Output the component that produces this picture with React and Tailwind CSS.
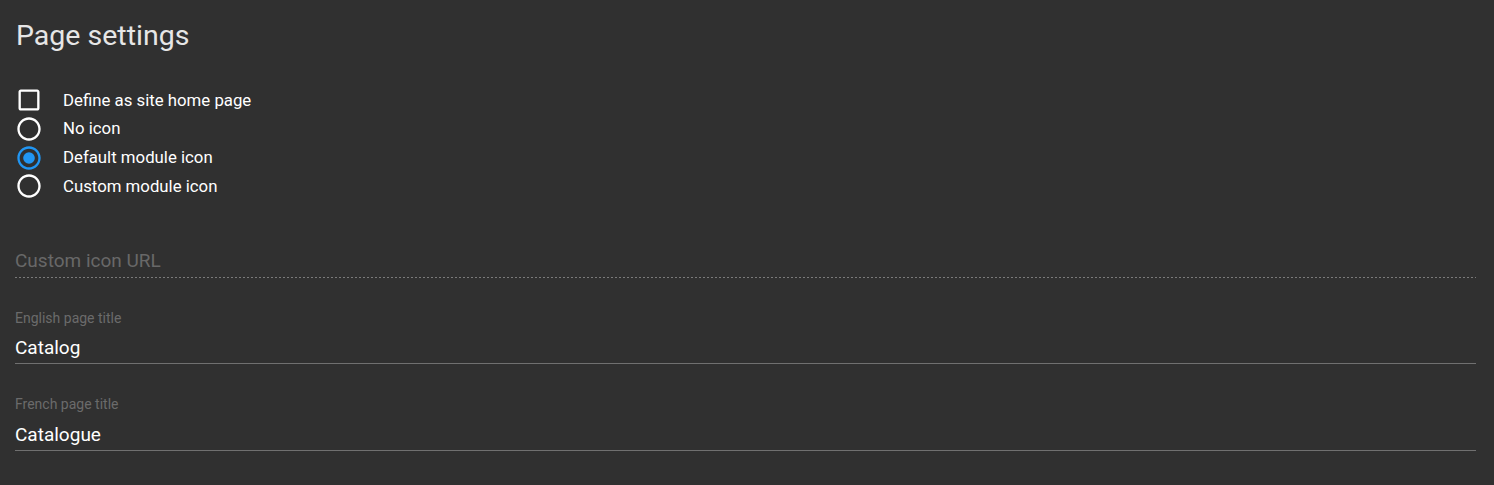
import React, { useState } from 'react'

const CheckboxIcon = ({ checked }) => (
    <svg width="28" height="28" viewBox="0 0 24 24" className="fill-white">
        {checked ? (
            <path d="M19 3H5c-1.11 0-2 .9-2 2v14c0 1.1.89 2 2 2h14c1.11 0 2-.9 2-2V5c0-1.1-.89-2-2-2zm-9 14l-5-5 1.41-1.41L10 14.17l7.59-7.59L19 8l-9 9z" />
        ) : (
            <path d="M19 5v14H5V5h14m0-2H5c-1.1 0-2 .9-2 2v14c0 1.1.9 2 2 2h14c1.1 0 2-.9 2-2V5c0-1.1-.9-2-2-2z" />
        )}
    </svg>
)

const RadioIcon = ({ checked }) => (
    <svg width="28" height="28" viewBox="0 0 24 24" className={checked ? 'fill-[#2196f3]' : 'fill-white'}>
        {checked && <circle cx="12" cy="12" r="5" />}
        <path d="M12 2C6.48 2 2 6.48 2 12s4.48 10 10 10 10-4.48 10-10S17.52 2 12 2zm0 18c-4.42 0-8-3.58-8-8s3.58-8 8-8 8 3.58 8 8-3.58 8-8 8z" />
    </svg>
)

const TextField = ({ label, value, onChange }) => (
    <div className="flex flex-col">
        <label className="text-[14px] leading-[13px] text-[#6b6b6b]">{label}</label>
        <input
            className="mt-[13.5px] text-[19px] leading-[20px] h-[20px] text-white bg-transparent outline-none"
            value={value}
            onChange={(e) => onChange(e.target.value)}
        />
        <div className="mt-[5px] h-px bg-[#707070]" />
    </div>
)

const App = () => {
    const [homePage, setHomePage] = useState(false)
    const [iconMode, setIconMode] = useState('default')
    const [enTitle, setEnTitle] = useState('Catalog')
    const [frTitle, setFrTitle] = useState('Catalogue')

    const iconOptions = [
        { id: 'none', label: 'No icon' },
        { id: 'default', label: 'Default module icon' },
        { id: 'custom', label: 'Custom module icon' }
    ]

    return (
        <div className="min-h-screen bg-[#303030] pl-[15px] pr-[18px] pt-[22px] font-['Roboto',sans-serif]">
            <h1 className="ml-px text-[28.5px] leading-[28px] text-[#e6e6e6]">Page settings</h1>

            <div className="mt-[36px] flex flex-col">
                <div className="flex items-center h-[28.7px] cursor-pointer" onClick={() => setHomePage(!homePage)}>
                    <CheckboxIcon checked={homePage} />
                    <span className="ml-[20px] text-[16.8px] text-white">Define as site home page</span>
                </div>
                {iconOptions.map((opt) => (
                    <div
                        key={opt.id}
                        className="flex items-center h-[28.7px] cursor-pointer"
                        onClick={() => setIconMode(opt.id)}
                    >
                        <RadioIcon checked={iconMode === opt.id} />
                        <span className="ml-[20px] text-[16.8px] text-white">{opt.label}</span>
                    </div>
                ))}
            </div>

            {/* disabled unless custom icon is picked */}
            <div className="mt-[50.5px] flex flex-col">
                <input
                    disabled={iconMode !== 'custom'}
                    placeholder="Custom icon URL"
                    className="text-[19px] leading-[20px] h-[20px] bg-transparent outline-none text-white placeholder:text-[#686868]"
                />
                <div className="mt-[5.5px] h-px bg-[linear-gradient(to_right,#7a7a7a_0%,#7a7a7a_40%,transparent_40%)] bg-[length:4px_1px] bg-repeat-x" />
            </div>

            <div className="mt-[34px] flex flex-col gap-[34px]">
                <TextField label="English page title" value={enTitle} onChange={setEnTitle} />
                <TextField label="French page title" value={frTitle} onChange={setFrTitle} />
            </div>
        </div>
    )
}

export default App
